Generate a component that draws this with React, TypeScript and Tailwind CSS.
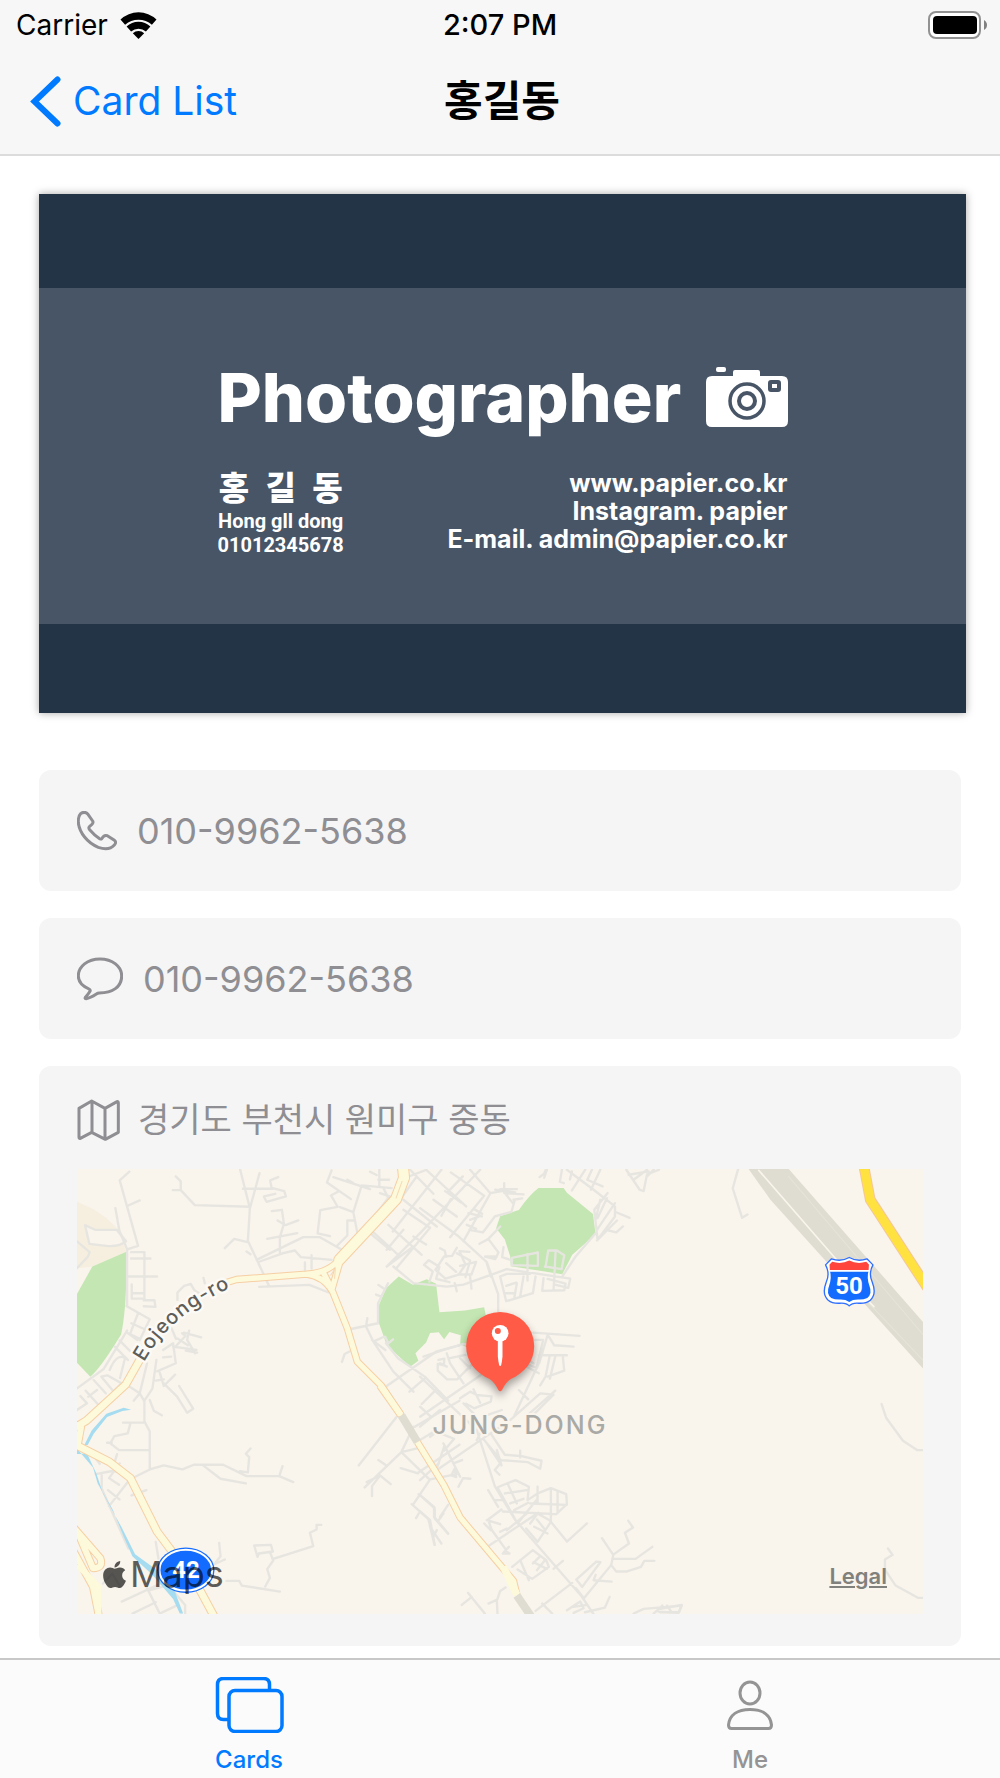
import type { ReactNode } from "react";
import { FaApple } from "react-icons/fa";

const SANS = "font-['Inter','Noto_Sans_CJK_KR',sans-serif]";

function WifiIcon() {
  return (
    <svg className="h-[27px] w-[37px]" viewBox="0 0 37 27" aria-label="Wi-Fi">
      <path d="M0.5 7.500a26 26 0 0 1 36 0l-4.600 5.200a20.4 20.4 0 0 0-26.800 0z" />
      <path d="M6.6 14.400a17.3 17.3 0 0 1 23.8 0l-4.500 5a11.7 11.7 0 0 0-14.800 0z" />
      <path d="M12.8 21.200a8.400 8.400 0 0 1 11.400 0L18.500 27z" />
    </svg>
  );
}

function BatteryIcon() {
  return (
    <svg className="h-7 w-[60px]" viewBox="0 0 60 28" aria-label="Battery full">
      <rect x="1" y="1" width="51" height="26" rx="7" fill="#fff" stroke="#929292" strokeWidth="2" />
      <rect x="5" y="5" width="44" height="18" rx="4" />
      <path d="M56 9c4 2 4 8 0 10z" fill="#808080" />
    </svg>
  );
}

function StatusBar() {
  return (
    <div className="grid h-12 grid-cols-[1fr_auto_1fr] items-center px-3 pt-0.5">
      <div className="flex items-center gap-3 pl-1">
        <span className="text-[28px] leading-8">Carrier</span>
        <WifiIcon />
      </div>
      <div className="text-center text-[29px] leading-8 font-medium">2:07 PM</div>
      <div className="flex justify-end">
        <BatteryIcon />
      </div>
    </div>
  );
}

function NavBar() {
  return (
    <div className="grid h-[106px] grid-cols-3 items-center pr-[26px] pl-[30px]">
      <a href="#cards" className="flex items-center gap-3 text-[39px] leading-12 text-[#007aff]">
        <svg className="h-[51px] w-[31px]" viewBox="0 0 31 51" fill="none" stroke="currentColor">
          <path d="M27.500 3.500L4.500 25.500l23 22" strokeWidth="6" strokeLinecap="round" strokeLinejoin="miter" />
        </svg>
        Card List
      </a>
      <h1 className="text-center text-[42px] leading-12 font-bold">홍길동</h1>
    </div>
  );
}

function CameraIcon() {
  return (
    <svg className="h-[60px] w-[82px]" viewBox="0 0 82 60" fill="#fff">
      <rect x="10" y="0" width="10" height="5" rx="2" />
      <path d="M6 9h21V5q0-2 2-2h23q2 0 2 2v4h22q6 0 6 6v39q0 6-6 6H6q-6 0-6-6V15q0-6 6-6z" />
      <g fill="none" stroke="#475566">
        <circle cx="41" cy="34" r="17" strokeWidth="3.500" />
        <circle cx="41" cy="34" r="8" strokeWidth="4" />
        <rect x="64" y="15" width="9" height="8" rx="1" strokeWidth="4" />
      </g>
    </svg>
  );
}

function BusinessCard() {
  return (
    <section className="-mr-[5px] flex h-[519px] flex-col justify-center bg-[#233446] pt-[5px] text-white shadow-[0_0_8px_rgba(0,0,0,0.35)]">
      <div className="flex h-[336px] flex-col items-center justify-center bg-[#475566]">
        <div className="w-[570px]">
          <div className="flex items-center justify-between">
            <h2 className="text-[68px] leading-[84px] font-extrabold">Photographer</h2>
            <CameraIcon />
          </div>
          <div className="mt-7 flex justify-between pt-0.5 font-['Roboto','Noto_Sans_CJK_KR',sans-serif] font-bold">
            <div className="text-center text-[20px] leading-6">
              <p className="text-[33px] leading-10 font-black whitespace-pre">홍  길  동</p>
              <p>Hong gll dong</p>
              <p>01012345678</p>
            </div>
            <div className="text-right font-['Inter',sans-serif] text-[25px] leading-7">
              <p>www.papier.co.kr</p>
              <p>Instagram. papier</p>
              <p>E-mail. admin@papier.co.kr</p>
            </div>
          </div>
        </div>
      </div>
    </section>
  );
}

type ContactRowProps = {
  href: string;
  icon: ReactNode;
  label: string;
};

function ContactRow({ href, icon, label }: ContactRowProps) {
  return (
    <a href={href} className="flex h-[121px] items-center gap-5 rounded-xl bg-[#f5f5f5] px-[38px] text-[36px] leading-11 text-[#8e8e93]">
      {icon}
      {label}
    </a>
  );
}

function PhoneIcon() {
  return (
    <svg className="size-10" viewBox="171 210 120 120" fill="none" stroke="currentColor" strokeWidth="9" strokeLinejoin="round">
      <path d="M182 218q12-9 22 2l14 20q3 6-3 11l-6 5q-5 4 0 10 15 17 28 26 5 4 9 0l5-6q4-4 11-2l20 13q9 6 1 15-16 18-48 7c-34-14-56-44-60-73q-1-20 7-28z" />
    </svg>
  );
}

function MessageIcon() {
  return (
    <svg className="h-11 w-[46px]" viewBox="171 650 138 132" fill="none" stroke="currentColor" strokeWidth="9" strokeLinejoin="round">
      <path d="M240 656c37 0 65 22 65 51 0 33-28 51-67 51q-5 0-9 3-18 12-31 14-5 0-1-5 9-10 13-17 2-4-3-7c-20-9-32-21-32-39 0-29 28-51 65-51z" />
    </svg>
  );
}

function MapIcon() {
  return (
    <svg className="h-[42px] w-[43px]" viewBox="170 1078 129 126" fill="none" stroke="currentColor" strokeWidth="9" strokeLinejoin="round">
      <path d="M176 1106l38-22 40 22 36-20q4-1 4 4v88l-39 21-41-21-34 18q-4 2-4-3zM215 1084v92M254 1106v92" />
    </svg>
  );
}

// Small streets, grouped by the map tile they belong to
const WEST_STREETS =
  "M209 66l-29 26 55 196-30 10M204 168l36-16M167 175l12 68 23 55v170M214 307h40v144M254 309v142M214 326h58M203 380h89M216 404v42h38M252 451h32l3 20-35-2M216 430h36" +
  "M348 80l15 15v26l42 45 165 5M363 121h-24M541 60l29 115-6 98 64 136M599 70l-30 110M549 117h90M655 82l-24 10 4 22 38 10 5 16-58 16-8-16 34-8M636 184l30-4 6 42-12 40v45M653 212l24 14 38-14M712 250l-90 17M590 330l140-68h50l70 40M600 335l70-25 35-8 18 20 92 8M495 295l28-28 40 10M560 305l12 8M598 411l150-6 64 25M735 360v-22M755 316v40" +
  "M815 62l-14 36 72 50M820 82l110 36M880 100l-18-10M835 125l-22 12 20 34-52 10-8 70 37 8M840 172l40 15 25-80 90 8M880 187l12 62M880 212h-18v45l-30 30M930 66l20 10M958 60v52M970 115l15 30M955 90h32" +
  "M353 450v-22l20-20 20-6 10 18 20 14M435 400l-4-16M200 468l70 40-30 62M235 490l-24 62 30 15M215 520l40 18M165 590l40 40M180 572l40 40M205 550l28 20M52 715l80-58 70-115M52 780l30-20-20-22M78 722l36 40M102 690l36 40M86 740l26-20M125 680l36 44 24-24-42-24zM150 660q20-50 46-36l-15 60" +
  "M335 535l14 32M345 592l32-34-10-8M354 566l30 20M372 548l52 14M388 542l-6 28 24 40M340 590l70 10M378 602l34 6M310 600l30-20 8 60-56 24M310 622l24-2M262 640l-22 90 14 24v60l16 30v115M290 630l-12 86-24 36M240 730l-30 -20M222 752l18-22M270 750l12 32 24 14M300 668l12 40 34-34M288 692l24-4M312 700l40 40 30 48 18-12-42-68" +
  "M190 818h60M212 820l-8 30-40 8-12 22 26 20h88M142 878h14M270 900v58l-60 30-62 80M270 958l42-12 56 12 34-14h88l70 34h98l42 18M430 946l52 40 76 14M572 895l-14 16 10 10-4 46-24-4M658 978l10-30M100 915l20 26M172 912l-10 34M108 972l54-10 50 20M126 975v40l80 180M180 940l-32 44 30 20M145 1020l34 28M260 1020l-45 16M288 1175l8 50M478 1178l4 40-24 30M495 1228l-40 18M583 1186l50-2 6 20-42 6-4 10zM640 1226l120-38-10-40 20-10v-14h14M630 1205l10 26-18 26 8 26-14 26M500 1292h38l8 14 114 18M186 1354l130-60 60 70v26M130 1300l28-30 24 40M218 1390l70-34M260 1310l40 80 50-24M270 1320l60-16" +
  "M870 538l84-18M922 505l-4 25 22 45 60 90 60 60M940 575l30-14M976 600l-40-30M975 560l10 20 14-12M870 604l-16 8-8 24M978 580l36 45 80 55 70 72M954 520v-60l30-60M955 405l15 10M948 434l16 6M980 708l150-104 68-18M1048 725l46-40M1085 762l44-44M1064 830l134-78M1010 800l-114 146M1060 830l-36 76 84 82M1024 906l-110 106M955 930l24 16M920 996l40-20 32 26M960 976l-24 32v30M1074 970l-52-16M1024 906l50-12M1074 968l124-84M1060 1062l50-74 80-16M1055 1062l50 45 18 76M1076 1032l46 38v30l42 50M1076 1090l-8 14M1150 1090l-14 20";

const CENTER_STREETS =
  "M-50 150l100 80M64 60L-82 245M-30 60l70 72M18 60l120 110M180 60L0 250-100 350M92 68l100 70-102 124M150 60l60 70 48-8M210 132l-80 142M128 80l-46 48M40 150l70 50M75 124l48 34M92 148l-28 50M-60 90l80-30M-120 130l60 20 50-70M-50 180l80 54-100 120M-150 250l60 50M-92 140L-160 230M-148 240L-60 320M-20 260l38 24M-20 290l-80 60M-95 225l100 90M-100 300l50 -60" +
  "M0 175l112 82 88 80 34 96v52M-80 350l60 50 100 10 50-6 130-46 190 28-6 28-40-10M200 340l12 40M225 120l60 8M252 100v30l58 4M290 118l-50 0M284 150l-10 36-50 14-36 48-40 -8M145 190l40 10M150 210l30-12M140 225l28 12M162 178l24 14M280 150l26-4M254 130l24 30M178 282l26-14 36-38M205 268l30 40-10 20-30-8M200 320h30M250 292l-4 30 30 10M240 380l18 74 80-24 8-50M240 380l20-8h70M258 408l30-10M290 400l-8 46M310 380l-10 60M256 430h28M370 385l-4 38 66-2 4-20-54-14M402 385l-2 34M275 324l78-16v40l-78-2zM322 312v80M376 352l8-50h26l22 14-8 42-50-8M406 306l-4 80" +
  "M60 295l14 8 4 18M110 294l-14 24-24 2-26 40 30 26 40-12 20-30-18-40 30 2M12 345l14-14 32 20-10 36 40 10M12 345l26 20-10 30M110 310l40 22-14 50M120 348l48-12-14 38-40 0M150 380l4 36M104 400l6 24M78 340l30 26" +
  "M358 82l14-10 6-16M380 60l-8 24M425 60l-6 36 12 4M455 65l-6 24M440 60l80 60 64 50v30l-52 70-10-90 40-50M495 60l-40 62M540 60l-28 60M515 60l-14 30 46 20M540 150l-14 60M560 145l-28 60M584 160l-54 80M584 186l44 18M590 212l-60 60M608 230l-20 18-30-8M526 250l-60 70-40 60M618 60l40 60 12 4 10-50 36-14M625 75l60-10M640 90l40-30M700 60l-20 20" +
  "M340 548l138 10M386 560l16 26 58 4M382 556l-24 80-75 160M440 616h-84M345 570h24l-20 84-24-10M388 620l-12 60-16 26M405 620l-16 66M428 622l4 40-50 18M340 640l-20-12M300 640l56 30M296 720l28 28M270 810l90-80 40 4-60 60M405 722l-86 76" +
  "M10 620l60-20 60-18 20 4M55 630l18-4-2 20-18-4v20l28 26h30l60-60M86 625l50-10M80 610l10 30M120 625l30 30M60 640l20 10M0 680l170 160 54 168 60 100 200 230 40 60M0 800l190-130M0 830l60-50M0 770l32 30M90 640l40 60M120 745l30-20 20 10 44 4-2 16-50 20-24-14M160 718l20 40M130 760l30 30M0 870l52-32M56 956l190-130M30 860l20-14 52 20-30 36M72 890l-20 60M0 990l56-50M70 880l50 100M100 940l26-10M104 955l-10 20 14 6zM115 1010l14-26 22 2M245 780l-40 14M170 870l10 -20M192 870l50 60 80 6 38 20 4-24-60-14-50-4-40-60M300 902v20M200 880l40 60-16 20 14 14M230 900l14 46" +
  "M204 1020l30 50M236 1010l50-20 40 20-4 40 30-20 40-16 46 18 2 30-32 30-160-8M232 1012l60 108 60-74M262 1000l28 60M254 1030l66-10M270 1060l40-14M282 1080l42-22M352 1010v50M392 1015v100l-40 60-34-40M412 1026v60M330 1060l110 4M222 1050l24 0M244 1078l-40 30 10 30 50 70M200 1110l40 12M192 1120l20 20M240 1145l20-10M266 1190l-18 20 20 0M204 1188l150-100M342 1130l40 20M330 1120l22-30 36 20 52 64 60-54M350 1108l24 30M276 1250l62-50 40 30 8 20-50 36-44-28M300 1230l26 60M340 1236l40 20M338 1240l20-20M350 1260l24-30M320 1090l-60 50" +
  "M545 1164l34 50-6 30-82 100-24-30M624 1112l14 20-24 16 12 32-48 34M696 1190l-50 36h-70M702 1232h-30l-10 18-44 14-30 0-16-20M540 1236l-54 74-18-22 60-54zM526 1274l-6 16 54 4M428 1232l-28 24M456 1298l-110 84M366 1360l30 30M568 1340l-14 32-60 14M440 1380l40-26 10 20-30 14M460 1370l40-6M640 1390l30-14 114-10-10 22-60-4M700 1390l26-24" +
  "M144 1328l50 62M125 1364l30-24M256 1312l-16 10-10 30 2 38M205 1360l26-12M0 1035l44 40v30l40 46M0 1084l30 26 14 74M30 1130l34 50M60 1100l24 -36M40 1160l10-20";

function MapDrawing() {
  return (
    <svg className="block h-full w-full" viewBox="0 0 845 445" preserveAspectRatio="xMidYMid slice">
      <defs>
        <path id="eojeong" d="M67 193Q94 144 158 117" />
      </defs>
      <g transform="scale(0.33333) translate(-52 -57)" fill="none" strokeLinejoin="round" strokeLinecap="round">
        {/* parks */}
        <path d="M52 156L100 178 138 203 176 240 200 306 98 350 52 355z" fill="#f6efdf" />
        <path d="M76 226l30 14 65 0 28 34q-20 18-60 14l-50-6z" fill="#f9f4ec" stroke="#e7e5e0" strokeWidth="7" />
        <path d="M200 306l-102 44-46 82v206l40 42q30-24 92-126 18-80 16-248z" fill="#c3e6b2" />
        <path d="M1016 380L1058 405 1100 388 1128 402 1138 487 1215 482 1272 472 1290 560 1240 600 1200 583 1202 556 1168 546 1152 568 1136 547 1110 549 1098 578 1066 610 1075 632 1050 650 980 585 957 520V465L978 415z" fill="#c3e6b2" />
        <path d="M1435 115h75l10 14 78 64 8 60-70 62-30 58-154-24-2-30-16-50-26-34 12-36 56-18q30-44 59-66z" fill="#c3e6b2" />

        <path d="M52 275l38 32-6 14-32 34" stroke="#e7e5e0" strokeWidth="7" />
        <g stroke="#e7e5e0" strokeWidth="7">
          <path d={WEST_STREETS} />
          <path d={CENTER_STREETS} transform="translate(1080 0)" />
          <path d="M233 58l-16 58 28 88 16-10M663 762l14 42 50 68 42 28h20M682 1195l14 19-23 14v30l32 48 68 37h20M0 1376l64-12-8 22-56 0M20 1366l14 20" transform="translate(1800 0)" />
        </g>

        {/* stream */}
        <path d="M214 779l-22-6-52 18-44 50-22 44h10l18-34 40-50 46-18zM52 912l30-2 28 60 20 60 56 102 40 80 60 44 60 70 24 64h-10l-20-44-60-70-62-58-26-58-32-80-46-80-14-48-48-56z" fill="#a5dcf0" />

        {/* expressway */}
        <g transform="translate(1800 0)">
          <path d="M264 57h120l404 460v140L330 150z" fill="#dfdcd1" />
          <path d="M606 440l182 192M384 80l404 475" stroke="#e6e3d8" strokeWidth="3" />
          <path d="M295 62l235 270M620 450l20 20" stroke="#f9f4ec" strokeWidth="5" />
          <path d="M609 45l20 105 170 262" stroke="#f5c69b" strokeWidth="32" strokeLinejoin="miter" />
          <path d="M609 45l20 105 170 262" stroke="#ffe13f" strokeWidth="26" strokeLinejoin="miter" />
        </g>

        {/* trunk roads, casing first */}
        <g stroke="#f6cfa4">
          <path d="M500 398l30-9 210-16q70-4 102-50L1004 150M740 373q50 6 78 52l44 110 30 100 72 72 56 84M790 368l26 50 26-90" strokeWidth="22" />
          <path d="M838 330L1008 148l24-64-4-40" strokeWidth="36" />
          <path d="M960 706l62 88" strokeWidth="24" strokeLinecap="butt" />
          <path d="M1072 876l80 130 48 96 160 190 10 42" strokeWidth="22" strokeLinecap="butt" />
          <path d="M240 630l-42 74L80 812l-40 24M40 880l110 56 62 48 80 160 60 80 60 80 54 100" strokeWidth="26" />
          <path d="M40 820l24 12-10 54M40 1130l82 94q10 30-22 30L60 1160M40 1200l60 110 18 90" strokeWidth="24" />
        </g>
        <g stroke="#fdfadb">
          <path d="M500 398l30-9 210-16q70-4 102-50L1004 150M740 373q50 6 78 52l44 110 30 100 72 72 56 84M790 368l26 50 26-90" strokeWidth="16" />
          <path d="M838 330L1008 148l24-64-4-40" strokeWidth="30" />
          <path d="M960 706l62 88" strokeWidth="18" strokeLinecap="butt" />
          <path d="M1072 876l80 130 48 96 160 190 10 42" strokeWidth="16" strokeLinecap="butt" />
          <path d="M240 630l-42 74L80 812l-40 24M40 880l110 56 62 48 80 160 60 80 60 80 54 100" strokeWidth="20" />
          <path d="M40 820l24 12-10 54M40 1130l82 94q10 30-22 30L60 1160M40 1200l60 110 18 90" strokeWidth="18" />
          <path d="M60 1250l56 60v90" strokeWidth="18" />
        </g>
        <path d="M1330 1250l40 84" stroke="#fdfadb" strokeWidth="22" strokeLinecap="butt" />
        <path d="M1024 796l48 80M1370 1336l48 70" stroke="#dfdcd1" strokeWidth="24" strokeLinecap="butt" />
        <path d="M1008 145l18-50M812 376l14-20-2 30" stroke="#f6d9b4" strokeWidth="3" />

        {/* route shields */}
        <ellipse cx="378" cy="1260" rx="86" ry="68" fill="#146cff" />
        <ellipse cx="378" cy="1260" rx="79" ry="61" stroke="#fff" strokeWidth="6" />
        <g transform="translate(1800 0)">
          <path d="M513 327q28 10 53-4 25 14 53 4l18 18q-14 26-2 52 14 36-6 54-12 10-34 9-20-2-29 8-9-10-29-8-22 1-34-9-20-18-6-54 12-26-2-52z" fill="#fff" stroke="#2f6fff" strokeWidth="4" />
          <path d="M508 362h116q-6 22 2 44 10 26-6 38-12 6-28 5-16 0-26 7-10-7-26-7-16 1-28-5-16-12-6-38 8-22 2-44z" fill="#146cff" />
          <path d="M508 362l-1-18 8-8q28 8 51-4 23 12 51 4l8 8-1 18z" fill="#ff453c" />
          <path d="M508 363h116" stroke="#fff" strokeWidth="5" />
        </g>
      </g>

      <g className="font-['Inter',sans-serif]" strokeLinejoin="round">
        <text className="text-[20px] font-medium tracking-[1px]" fill="#5d5d5a" stroke="#fcfaf6" strokeWidth="5" paintOrder="stroke">
          <textPath href="#eojeong">Eojeong-ro</textPath>
        </text>
        <text x="355" y="265" className="text-[25px] font-medium tracking-[2px]" fill="#a9a9a5" stroke="#f9f4ec" strokeWidth="4" paintOrder="stroke">
          JUNG-DONG
        </text>
      </g>
      <g className="font-['Roboto',sans-serif] text-[24px] font-bold" fill="#fff" textAnchor="middle">
        <text x="109" y="409">42</text>
        <text x="771" y="125">50</text>
      </g>

      {/* pin */}
      <g transform="scale(0.33333) translate(1028 -57)">
        <path className="drop-shadow-[0_14px_12px_rgba(0,0,0,0.35)]" d="M240 486a102 102 0 0 1 102 102c0 46-28 80-70 99q-14 8-26 32-6 10-12 0-12-24-26-32c-42-19-70-53-70-99a102 102 0 0 1 102-102z" fill="#ff5b46" />
        <path d="M233 570h14v50q-2 18-4 26-3 4-6 0-2-8-4-26z" fill="#fff" />
        <circle cx="240" cy="550" r="25" fill="#fff" />
        <circle cx="233" cy="543" r="9" fill="#ff5b46" />
      </g>
    </svg>
  );
}

function AddressCard() {
  return (
    <section className="rounded-xl bg-[#f5f5f5] px-[38px] pt-8 pb-8">
      <div className="mb-[27px] flex h-11 items-center gap-[18px] text-[34px] leading-11 text-[#8e8e93]">
        <MapIcon />
        경기도 부천시 원미구 중동
      </div>
      <div className="relative h-[445px] overflow-hidden bg-[#f9f4ec]">
        <MapDrawing />
        <div className="absolute bottom-[18px] left-[22px] flex items-center text-[36px] leading-11 text-black/65">
          <FaApple className="size-[31px]" />
          Maps
        </div>
        <a href="#legal" className="absolute right-9 bottom-6 text-[22px] leading-7 font-semibold text-[#80807c] underline decoration-2 underline-offset-2">
          Legal
        </a>
      </div>
    </section>
  );
}

function TabBar() {
  return (
    <nav className="sticky bottom-0 grid h-[120px] grid-cols-2 border-t-2 border-[#c8c8c8] bg-[#fbfbfb] text-[24px] leading-7 font-medium">
      <a href="#cards" className="flex flex-col items-center gap-[13px] pt-[17px] pr-0.5 text-[#007aff]">
        <svg className="h-14 w-[69px]" viewBox="0 0 69 56" fill="none" stroke="currentColor" strokeWidth="3.500">
          <path d="M13.500 42.500H8.500q-6 0-6-6v-29q0-6 6-6h40q6 0 6 6v5" />
          <rect x="14" y="13.500" width="53" height="41" rx="6" />
        </svg>
        Cards
      </a>
      <a href="#me" className="flex flex-col items-center gap-[13px] pt-[17px] text-[#949494]">
        <svg className="h-14 w-[46px]" viewBox="0 0 46 56" fill="none" stroke="currentColor" strokeWidth="3">
          <ellipse cx="23" cy="16" rx="10" ry="11" />
          <path d="M4.500 51.500q-3 0-3-3.500c1-10 9-15.500 21.500-15.500s20.500 5.500 21.500 15.500q0 3.500-3 3.500z" />
        </svg>
        Me
      </a>
    </nav>
  );
}

export default function App() {
  return (
    <div className={`flex min-h-screen flex-col bg-white text-black ${SANS}`}>
      <header className="border-b-2 border-[#dcdcdc] bg-[#f7f7f7]">
        <StatusBar />
        <NavBar />
      </header>
      <main className="flex-1 px-[39px] pt-[38px] pb-3">
        <BusinessCard />
        <div className="mt-[57px] flex flex-col gap-[27px]">
          <ContactRow href="tel:01099625638" icon={<PhoneIcon />} label="010-9962-5638" />
          <ContactRow href="sms:01099625638" icon={<MessageIcon />} label="010-9962-5638" />
          <AddressCard />
        </div>
      </main>
      <TabBar />
    </div>
  );
}
